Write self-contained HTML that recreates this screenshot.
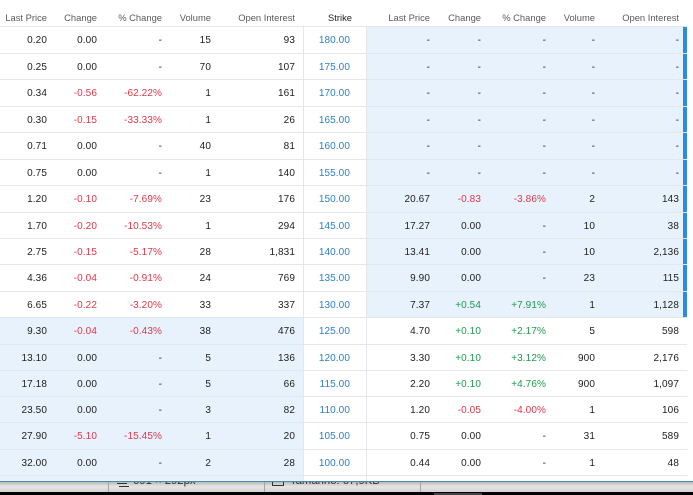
<!DOCTYPE html>
<html><head><meta charset="utf-8"><style>
html,body{margin:0;padding:0;background:#fff}
#p{position:relative;width:693px;height:495px;overflow:hidden;background:#fff;font:10px/26px "Liberation Sans",sans-serif;color:#222}
#in{position:absolute;left:0;top:0;width:693px;height:495px;filter:blur(.35px)}
.h,.r{position:absolute;left:0;width:687px;height:26px}
.h{top:0;font-size:9.4px;color:#5a5a5a;height:26px}
.r{border-top:1px solid #e3e6ea;height:26px;letter-spacing:.1px}
.r i,.h i{position:absolute;top:0;font-style:normal;text-align:right;white-space:nowrap}
i.a{right:640px}i.b{right:590px}i.c{right:525px}i.d{right:476px}i.e{right:392px}i.s{right:337px;color:#2a7fc9}
i.f{right:257px}i.g{right:206px}i.j{right:141px}i.k{right:92px}i.l{right:8px}
.h i.s{color:#222;right:335px}
.h i{top:5px}
.r i{top:1px}
.n{color:#e0384a!important}.u{color:#1f9a50!important}
.bl,.br,.bs{position:absolute}
.bl{left:0;width:304px;top:318px;height:163px;background:#e7f2fc}
.br{left:367px;width:320px;top:27px;height:291px;background:#e7f2fc}
.bs{left:303px;width:62px;top:27px;height:454px;background:#fff;border-left:1px solid #e3e6ea;border-right:1px solid #e3e6ea}
.bar{position:absolute;left:683px;width:4px;background:#2b8ce0}
#st{position:absolute;left:0;top:481px;width:693px;height:11px;background:linear-gradient(#b9b9b9,#e6e6e6 45%,#d2d2d2);border-top:1px solid #4a8ba8;box-sizing:border-box;overflow:hidden}
#st b{position:absolute;top:0;width:1px;height:11px;background:#a5a5a5}
#st span{position:absolute;top:-8px;font:11.3px/14px "Liberation Sans",sans-serif;color:#333;white-space:nowrap}
#st u{position:absolute;background:#333;height:1px}
#k{position:absolute;left:0;top:492px;width:693px;height:3px;background:#000}
#k b{position:absolute;left:434px;width:48px;top:1px;height:2px;background:#444}
</style></head><body><div id="p"><div id="in">
<div class="bl"></div><div class="br"></div><div class="bs"></div>
<div class="h"><i class="a">Last Price</i><i class="b">Change</i><i class="c">% Change</i><i class="d">Volume</i><i class="e">Open Interest</i><i class="s">Strike</i><i class="f">Last Price</i><i class="g">Change</i><i class="j">% Change</i><i class="k">Volume</i><i class="l">Open Interest</i></div>

<div class="r" style="top:26px"><i class="a">0.20</i><i class="b">0.00</i><i class="c">-</i><i class="d">15</i><i class="e">93</i><i class="s">180.00</i><i class="f">-</i><i class="g">-</i><i class="j">-</i><i class="k">-</i><i class="l">-</i></div>
<div class="r" style="top:53px"><i class="a">0.25</i><i class="b">0.00</i><i class="c">-</i><i class="d">70</i><i class="e">107</i><i class="s">175.00</i><i class="f">-</i><i class="g">-</i><i class="j">-</i><i class="k">-</i><i class="l">-</i></div>
<div class="r" style="top:79px"><i class="a">0.34</i><i class="b n">-0.56</i><i class="c n">-62.22%</i><i class="d">1</i><i class="e">161</i><i class="s">170.00</i><i class="f">-</i><i class="g">-</i><i class="j">-</i><i class="k">-</i><i class="l">-</i></div>
<div class="r" style="top:106px"><i class="a">0.30</i><i class="b n">-0.15</i><i class="c n">-33.33%</i><i class="d">1</i><i class="e">26</i><i class="s">165.00</i><i class="f">-</i><i class="g">-</i><i class="j">-</i><i class="k">-</i><i class="l">-</i></div>
<div class="r" style="top:132px"><i class="a">0.71</i><i class="b">0.00</i><i class="c">-</i><i class="d">40</i><i class="e">81</i><i class="s">160.00</i><i class="f">-</i><i class="g">-</i><i class="j">-</i><i class="k">-</i><i class="l">-</i></div>
<div class="r" style="top:159px"><i class="a">0.75</i><i class="b">0.00</i><i class="c">-</i><i class="d">1</i><i class="e">140</i><i class="s">155.00</i><i class="f">-</i><i class="g">-</i><i class="j">-</i><i class="k">-</i><i class="l">-</i></div>
<div class="r" style="top:185px"><i class="a">1.20</i><i class="b n">-0.10</i><i class="c n">-7.69%</i><i class="d">23</i><i class="e">176</i><i class="s">150.00</i><i class="f">20.67</i><i class="g n">-0.83</i><i class="j n">-3.86%</i><i class="k">2</i><i class="l">143</i></div>
<div class="r" style="top:212px"><i class="a">1.70</i><i class="b n">-0.20</i><i class="c n">-10.53%</i><i class="d">1</i><i class="e">294</i><i class="s">145.00</i><i class="f">17.27</i><i class="g">0.00</i><i class="j">-</i><i class="k">10</i><i class="l">38</i></div>
<div class="r" style="top:238px"><i class="a">2.75</i><i class="b n">-0.15</i><i class="c n">-5.17%</i><i class="d">28</i><i class="e">1,831</i><i class="s">140.00</i><i class="f">13.41</i><i class="g">0.00</i><i class="j">-</i><i class="k">10</i><i class="l">2,136</i></div>
<div class="r" style="top:264px"><i class="a">4.36</i><i class="b n">-0.04</i><i class="c n">-0.91%</i><i class="d">24</i><i class="e">769</i><i class="s">135.00</i><i class="f">9.90</i><i class="g">0.00</i><i class="j">-</i><i class="k">23</i><i class="l">115</i></div>
<div class="r" style="top:291px"><i class="a">6.65</i><i class="b n">-0.22</i><i class="c n">-3.20%</i><i class="d">33</i><i class="e">337</i><i class="s">130.00</i><i class="f">7.37</i><i class="g u">+0.54</i><i class="j u">+7.91%</i><i class="k">1</i><i class="l">1,128</i></div>
<div class="r" style="top:317px"><i class="a">9.30</i><i class="b n">-0.04</i><i class="c n">-0.43%</i><i class="d">38</i><i class="e">476</i><i class="s">125.00</i><i class="f">4.70</i><i class="g u">+0.10</i><i class="j u">+2.17%</i><i class="k">5</i><i class="l">598</i></div>
<div class="r" style="top:344px"><i class="a">13.10</i><i class="b">0.00</i><i class="c">-</i><i class="d">5</i><i class="e">136</i><i class="s">120.00</i><i class="f">3.30</i><i class="g u">+0.10</i><i class="j u">+3.12%</i><i class="k">900</i><i class="l">2,176</i></div>
<div class="r" style="top:370px"><i class="a">17.18</i><i class="b">0.00</i><i class="c">-</i><i class="d">5</i><i class="e">66</i><i class="s">115.00</i><i class="f">2.20</i><i class="g u">+0.10</i><i class="j u">+4.76%</i><i class="k">900</i><i class="l">1,097</i></div>
<div class="r" style="top:396px"><i class="a">23.50</i><i class="b">0.00</i><i class="c">-</i><i class="d">3</i><i class="e">82</i><i class="s">110.00</i><i class="f">1.20</i><i class="g n">-0.05</i><i class="j n">-4.00%</i><i class="k">1</i><i class="l">106</i></div>
<div class="r" style="top:422px"><i class="a">27.90</i><i class="b n">-5.10</i><i class="c n">-15.45%</i><i class="d">1</i><i class="e">20</i><i class="s">105.00</i><i class="f">0.75</i><i class="g">0.00</i><i class="j">-</i><i class="k">31</i><i class="l">589</i></div>
<div class="r" style="top:449px"><i class="a">32.00</i><i class="b">0.00</i><i class="c">-</i><i class="d">2</i><i class="e">28</i><i class="s">100.00</i><i class="f">0.44</i><i class="g">0.00</i><i class="j">-</i><i class="k">1</i><i class="l">48</i></div>
<div class="r" style="top:475px;height:5px"></div>

<div class="bar" style="top:27px;height:26px"></div><div class="bar" style="top:54px;height:25px"></div><div class="bar" style="top:80px;height:26px"></div><div class="bar" style="top:107px;height:25px"></div><div class="bar" style="top:133px;height:26px"></div><div class="bar" style="top:160px;height:25px"></div><div class="bar" style="top:186px;height:26px"></div><div class="bar" style="top:213px;height:25px"></div><div class="bar" style="top:239px;height:25px"></div><div class="bar" style="top:265px;height:26px"></div><div class="bar" style="top:292px;height:25px"></div>

<div id="st"><b style="left:108px"></b><b style="left:264px"></b><b style="left:420px"></b>
<u style="left:117px;top:1px;width:10px"></u><u style="left:119px;top:4px;width:10px"></u><span style="left:133px">691 × 292px</span>
<u style="left:272px;top:0;width:1px;height:4px"></u><u style="left:283px;top:0;width:1px;height:4px"></u><u style="left:272px;top:3px;width:12px"></u><span style="left:290px">Tamanho: 67,9KB</span></div>
<div id="k"><b></b></div>
</div></div></body></html>
